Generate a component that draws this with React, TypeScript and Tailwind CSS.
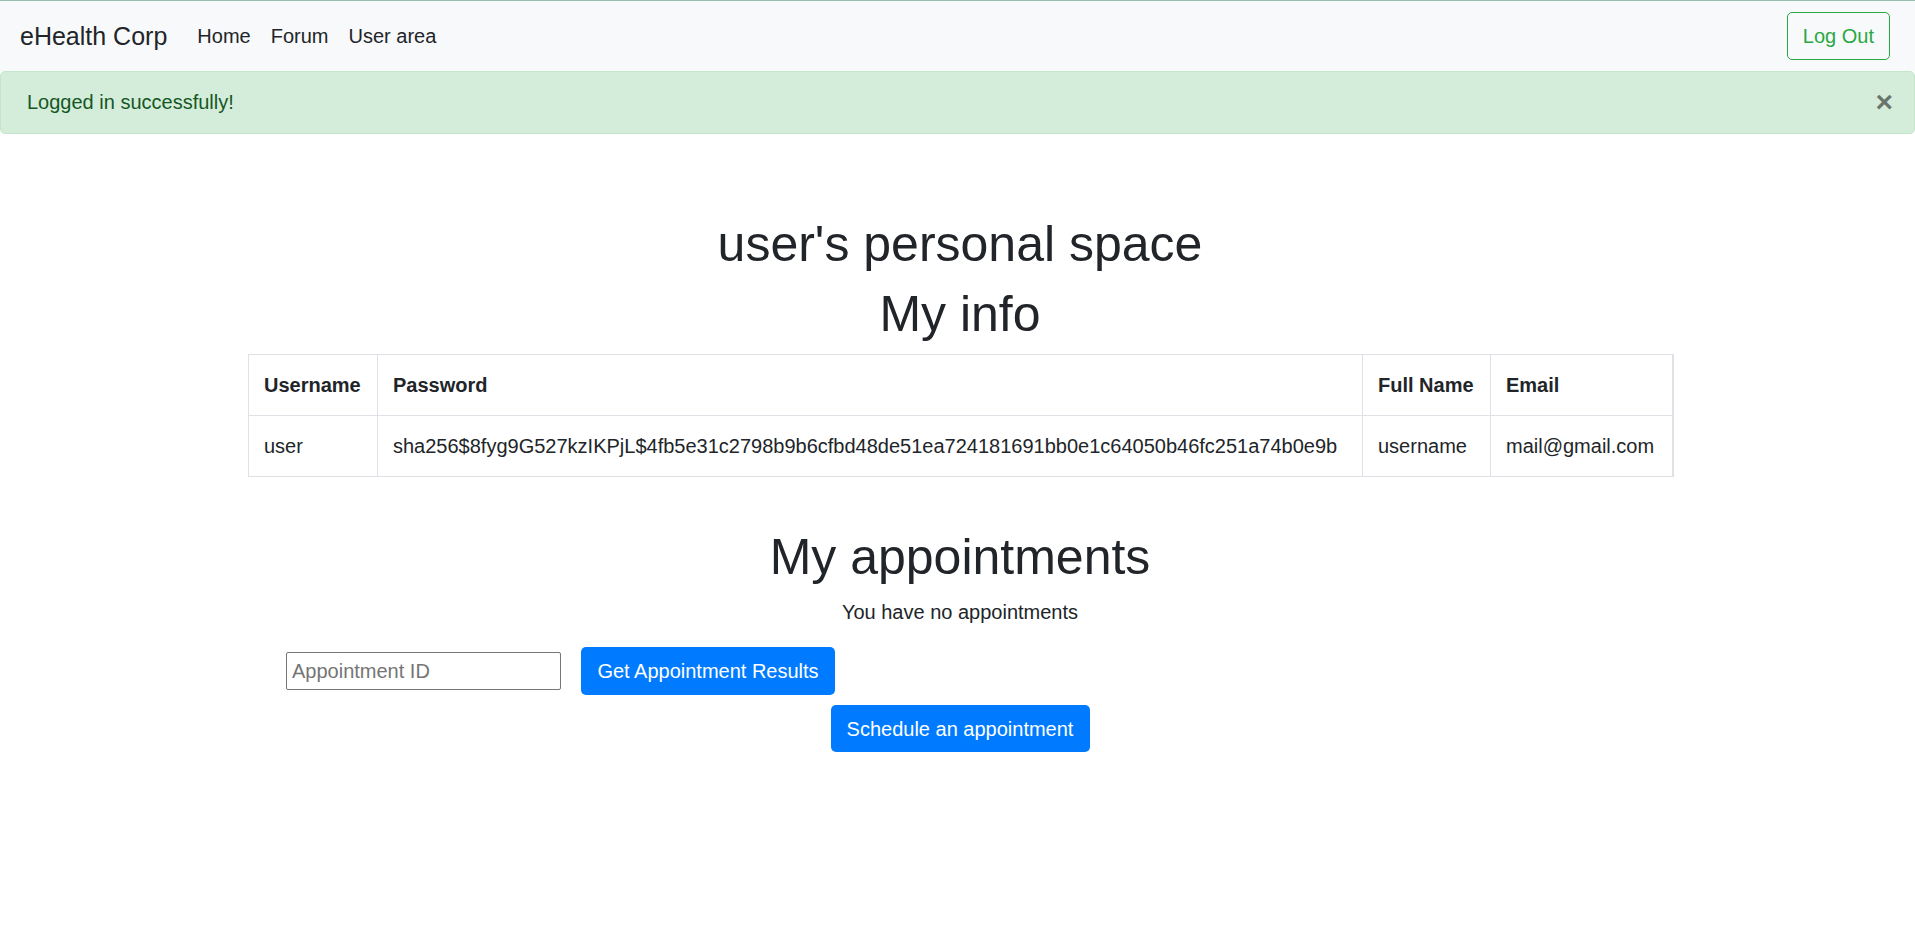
import React, { useState } from 'react';

const App: React.FC = () => {
  const [showAlert, setShowAlert] = useState<boolean>(true);
  const [appointmentId, setAppointmentId] = useState<string>('');

  return (
    <div className="min-h-screen bg-white font-['Liberation_Sans',Arial,sans-serif] text-[20px] text-[#212529]">
      <nav className="flex h-[71px] items-center border-t border-[#97bfae] bg-[#f8f9fa] pl-[20px] pr-[25px]">
        <a href="#" className="mr-[20px] text-[25px] leading-[36px] text-[#212529]">eHealth Corp</a>
        <div className="flex items-center">
          <a href="#" className="px-[10px] leading-[30px] text-[#212529]">Home</a>
          <a href="#" className="px-[10px] leading-[30px] text-[#212529]">Forum</a>
          <a href="#" className="px-[10px] leading-[30px] text-[#212529]">User area</a>
        </div>
        <button
          type="button"
          className="ml-auto h-[48px] rounded-[5px] border border-[#28a745] px-[15px] leading-[30px] text-[#28a745] hover:bg-[#28a745] hover:text-white"
        >
          Log Out
        </button>
      </nav>

      {showAlert && (
        <div className="flex h-[63px] items-center justify-between rounded-[5px] border border-[#c3e6cb] bg-[#d4edda] pb-[2px] pl-[26px] pr-[21px] text-[#155724]">
          <span className="leading-[30px]">Logged in successfully!</span>
          <button
            type="button"
            onClick={() => setShowAlert(false)}
            className="text-[30px] font-bold leading-none text-black opacity-50"
          >
            ×
          </button>
        </div>
      )}

      <div className="ml-[248px] w-[1424px] pt-[80px] text-center">
        <h1 className="mb-[10px] text-[50px] leading-[60px]">user's personal space</h1>
        <h1 className="mb-[10px] text-[50px] leading-[60px]">My info</h1>

        <table className="w-full table-fixed border-collapse border-r-2 border-[#dee2e6] text-left">
          <thead>
            <tr>
              <th className="w-[129px] border border-[#dee2e6] px-[15px] py-[15px] leading-[30px] font-bold">Username</th>
              <th className="w-[985px] border border-[#dee2e6] px-[15px] py-[15px] leading-[30px] font-bold">Password</th>
              <th className="w-[128px] border border-[#dee2e6] px-[15px] py-[15px] leading-[30px] font-bold">Full Name</th>
              <th className="w-[182px] border border-[#dee2e6] px-[15px] py-[15px] leading-[30px] font-bold">Email</th>
            </tr>
          </thead>
          <tbody>
            <tr>
              <td className="border border-[#dee2e6] px-[15px] py-[15px] leading-[30px]">user</td>
              <td className="border border-[#dee2e6] px-[15px] py-[15px] leading-[30px]">
                sha256$8fyg9G527kzIKPjL$4fb5e31c2798b9b6cfbd48de51ea724181691bb0e1c64050b46fc251a74b0e9b
              </td>
              <td className="border border-[#dee2e6] px-[15px] py-[15px] leading-[30px]">username</td>
              <td className="border border-[#dee2e6] px-[15px] py-[15px] leading-[30px]">mail@gmail.com</td>
            </tr>
          </tbody>
        </table>

        <h1 className="mb-[10px] mt-[50px] text-[50px] leading-[60px]">My appointments</h1>
        <p className="mb-[20px] leading-[30px]">You have no appointments</p>

        <div className="flex items-center pl-[38px]">
          <input
            type="text"
            placeholder="Appointment ID"
            value={appointmentId}
            onChange={(e: React.ChangeEvent<HTMLInputElement>) => setAppointmentId(e.target.value)}
            className="h-[38px] w-[275px] rounded-[2px] border border-[#767676] px-[5px] text-[20px] placeholder:text-[#757575]"
          />
          <button
            type="button"
            className="ml-[20px] h-[48px] w-[254px] rounded-[5px] bg-[#007bff] leading-[30px] text-white hover:bg-[#0069d9]"
          >
            Get Appointment Results
          </button>
        </div>

        <button
          type="button"
          className="mt-[10px] h-[47px] w-[259px] rounded-[5px] bg-[#007bff] leading-[30px] text-white hover:bg-[#0069d9]"
        >
          Schedule an appointment
        </button>
      </div>
    </div>
  );
};

export default App;
